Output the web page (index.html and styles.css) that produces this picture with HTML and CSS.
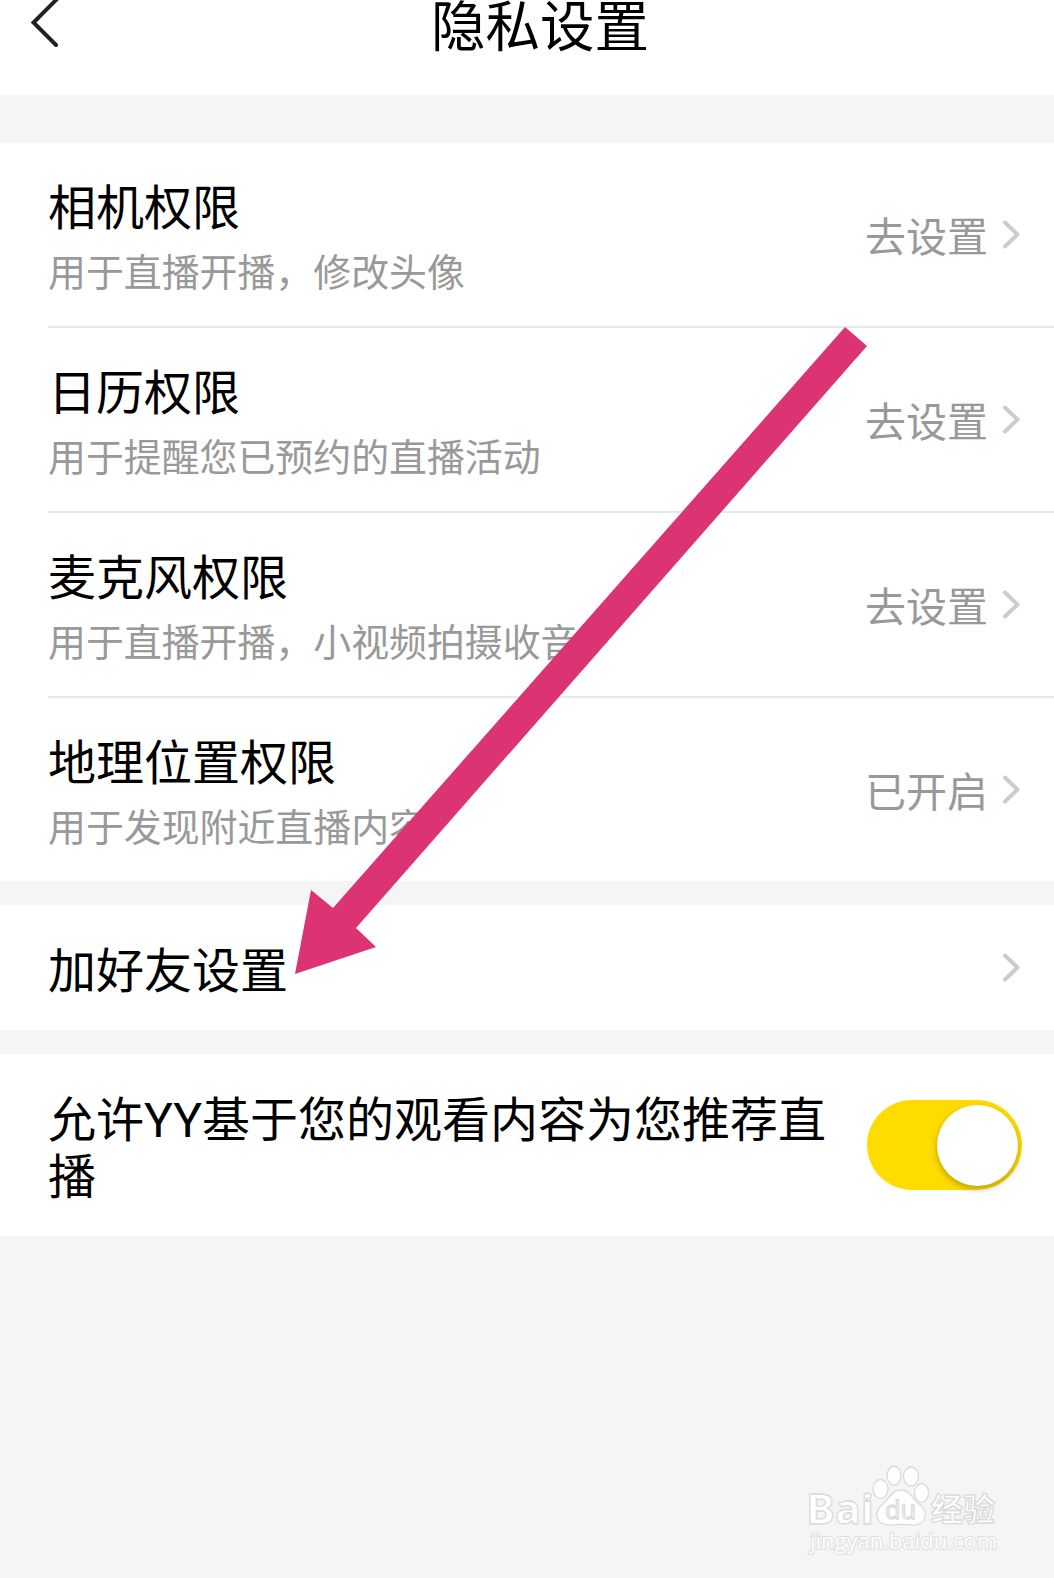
FILE: index.html
```html
<!DOCTYPE html>
<html lang="zh-CN">

<head>
    <meta charset="utf-8">
    <title>隐私设置</title>

    <link rel="stylesheet" href="styles.css">
</head>

<body>
    <div class="pagina">
        <header class="topo">
            <svg class="voltar" width="32" height="52" viewBox="0 0 32 52">
                <path d="M29.500 -1.500 L5.500 22.500 L28 45" />
            </svg>
            <h1 class="titulo">隐私设置</h1>
        </header>

        <ul class="lista">
            <li class="item">
                <div class="texto">
                    <h2>相机权限</h2>
                    <p>用于直播开播，修改头像</p>
                </div>
                <span class="estado">去设置</span>
                <svg class="seta" width="20" height="32" viewBox="0 0 20 32"><path d="M3 3.500 L15.500 15.500 L3 27.500" /></svg>
            </li>
            <li class="item">
                <div class="texto">
                    <h2>日历权限</h2>
                    <p>用于提醒您已预约的直播活动</p>
                </div>
                <span class="estado">去设置</span>
                <svg class="seta" width="20" height="32" viewBox="0 0 20 32"><path d="M3 3.500 L15.500 15.500 L3 27.500" /></svg>
            </li>
            <li class="item">
                <div class="texto">
                    <h2>麦克风权限</h2>
                    <p>用于直播开播，小视频拍摄收音</p>
                </div>
                <span class="estado">去设置</span>
                <svg class="seta" width="20" height="32" viewBox="0 0 20 32"><path d="M3 3.500 L15.500 15.500 L3 27.500" /></svg>
            </li>
            <li class="item">
                <div class="texto">
                    <h2>地理位置权限</h2>
                    <p>用于发现附近直播内容</p>
                </div>
                <span class="estado">已开启</span>
                <svg class="seta" width="20" height="32" viewBox="0 0 20 32"><path d="M3 3.500 L15.500 15.500 L3 27.500" /></svg>
            </li>
        </ul>

        <div class="amigos">
            <h2>加好友设置</h2>
            <svg class="seta" width="20" height="32" viewBox="0 0 20 32"><path d="M3 3.500 L15.500 15.500 L3 27.500" /></svg>
        </div>

        <div class="recomendar">
            <h2>允许<span class="yy">YY</span>基于您的观看内容为您推荐直播</h2>
            <div class="chave"><span class="botao"></span></div>
        </div>

        <!-- seta rosa -->
        <svg class="flecha" width="1054" height="1578" viewBox="0 0 1054 1578">
            <path d="M845 327 L867 346 L356 928 L376 947 L295 974 L311 890 L333 908 Z" />
        </svg>

        <!-- marca d'agua -->
        <svg class="marca" width="204" height="100" viewBox="0 0 204 100">
            <g class="logo">
                <text x="4" y="59" font-size="42" textLength="68" lengthAdjust="spacingAndGlyphs">Bai</text>
                <ellipse cx="78.500" cy="24" rx="7.500" ry="9.500" />
                <ellipse cx="92" cy="10.500" rx="7" ry="9.500" />
                <ellipse cx="109" cy="11.500" rx="7.500" ry="9.500" />
                <ellipse cx="119.500" cy="28" rx="7" ry="9.500" />
                <path d="M99 25 C107 25 110 33 116 38 C129 48 123 61 110 60 C102 59 97 59 89 60 C75 61 70 48 81 39 C87 34 90 25 99 25 Z" />
                <text class="du" x="83" y="54" font-size="25" textLength="31" lengthAdjust="spacingAndGlyphs">du</text>
                <text class="cn" x="129" y="56" font-size="32" textLength="64">经验</text>
            </g>
            <text class="site" x="8" y="84" font-size="21" textLength="187" lengthAdjust="spacingAndGlyphs">jingyan.baidu.com</text>
        </svg>
    </div>
</body>

</html>
```
FILE: styles.css
```css
* {
    box-sizing: border-box;
    margin: 0;
    padding: 0;
}

body {
    background-color: #f5f5f5;
    font-family: "Noto Sans CJK SC", sans-serif;
    font-weight: 400;
    color: #000000;
}

h1,
h2 {
    font-weight: 400;
}

.pagina {
    position: relative;
    height: 1578px;
    overflow: hidden;
}

.topo {
    display: flex;
    height: 95px;
    padding-left: 28px;
    background-color: #ffffff;
}

.voltar {
    fill: none;
    stroke: #222222;
    stroke-width: 4;
    stroke-linecap: round;
}

.titulo {
    margin-left: 371px;
    font-size: 54.500px;
    line-height: 46px;
}

.lista {
    margin-top: 48px;
    padding-left: 48px;
    list-style: none;
    background-color: #ffffff;
}

.item {
    display: flex;
    align-items: center;
    height: 185px;
    padding-right: 32px;
    border-bottom: 2px solid #e8e8e8;
}

.item:last-child {
    height: 183px;
    border-bottom: none;
}

.texto {
    flex-grow: 1;
    padding-top: 4px;
}

h2 {
    font-size: 48px;
    line-height: 58px;
}

.texto p {
    margin-top: 9px;
    font-size: 37.900px;
    line-height: 56px;
    color: #999999;
}

.estado {
    padding-bottom: 1px;
    font-size: 41px;
    line-height: 60px;
    color: #999999;
}

.seta {
    margin-left: 14px;
    fill: none;
    stroke: #cccccc;
    stroke-width: 4;
    stroke-linecap: round;
    stroke-linejoin: round;
}

.amigos {
    display: flex;
    align-items: center;
    justify-content: space-between;
    height: 125px;
    margin-top: 24px;
    padding: 0 32px 0 48px;
    background-color: #ffffff;
}

.amigos h2 {
    padding-bottom: 2px;
}

.recomendar {
    display: flex;
    align-items: center;
    justify-content: space-between;
    height: 182px;
    margin-top: 24px;
    padding: 0 32px 0 48px;
    background-color: #ffffff;
}

.recomendar h2 {
    width: 785px;
    line-height: 57px;
}

.yy {
    font-family: Roboto, sans-serif;
    line-height: 1;
}

.chave {
    display: flex;
    align-items: center;
    justify-content: flex-end;
    width: 155px;
    height: 90px;
    padding-right: 4px;
    border-radius: 45px;
    background-color: #ffdc00;
}

.botao {
    width: 81px;
    height: 81px;
    border-radius: 50%;
    background-color: #ffffff;
    box-shadow: 0 3px 7px rgba(0, 0, 0, 0.28);
}

.flecha {
    position: absolute;
    top: 0;
    left: 0;
    fill: #dc3374;
}

.marca {
    position: absolute;
    top: 1465px;
    left: 802px;
    overflow: visible;
}

.logo {
    font-family: "Open Sans", sans-serif;
    font-weight: 700;
    fill: #ffffff;
    stroke: #dadada;
    stroke-width: 1.300;
}

.du {
    font-weight: 400;
}

.cn {
    font-family: "Noto Sans CJK SC", sans-serif;
}

.site {
    font-family: "Open Sans", sans-serif;
    font-weight: 400;
    fill: #ffffff;
    stroke: #dddddd;
    stroke-width: 2;
    paint-order: stroke;
}
```
